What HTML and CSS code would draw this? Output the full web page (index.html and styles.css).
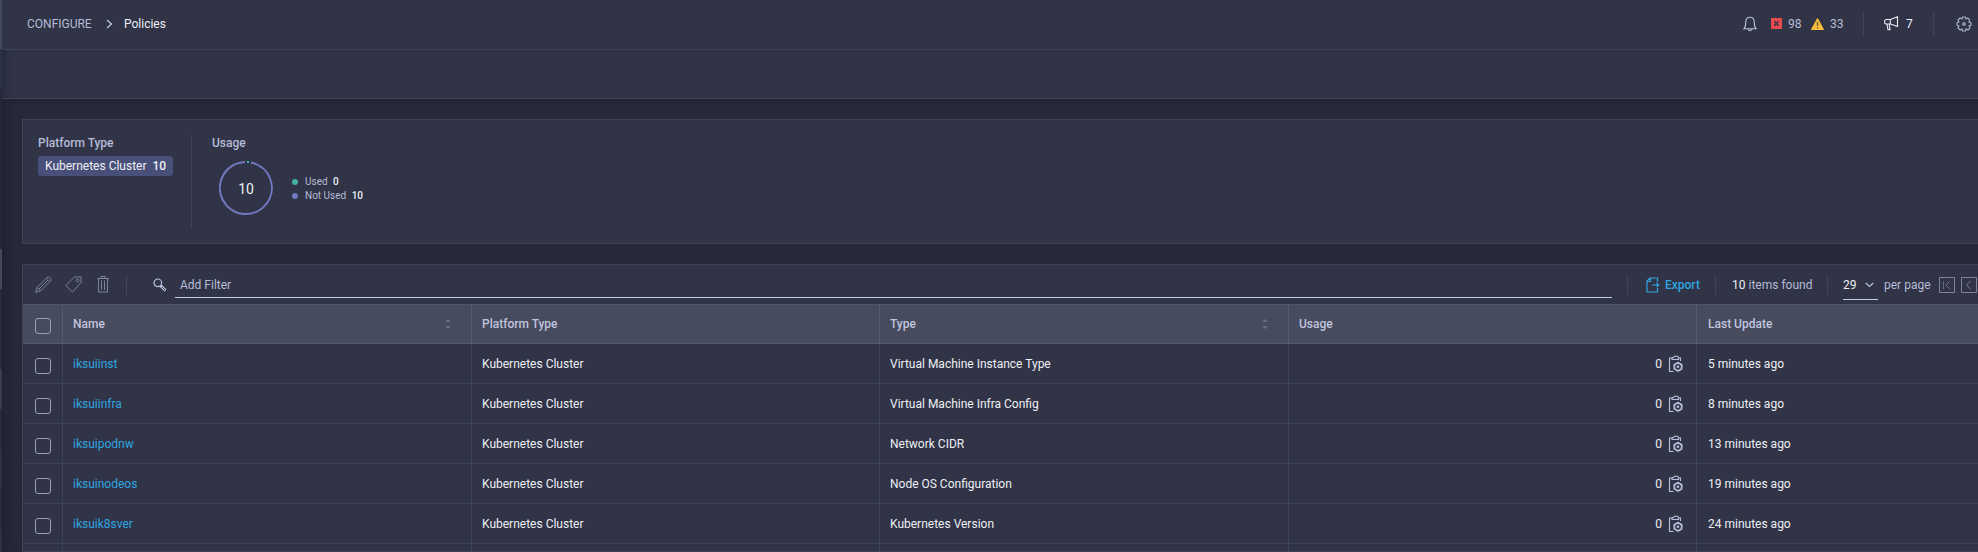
FILE: index.html
```html
<!DOCTYPE html>
<html lang="en">
<head>
<meta charset="utf-8">
<title>Policies</title>
<link rel="stylesheet" href="styles.css">
</head>
<body>
<svg class="defs" aria-hidden="true">
  <symbol id="clip" viewBox="0 0 16 18">
    <g fill="none" stroke="#bcc1de" stroke-width="1.1">
      <path d="M5.500 16.500H1.500V3H3.500M11 3H12.500V6"/>
      <path d="M4 4.500V2.500H5.500L6.500 1.300H9.500L10.500 2.500V4.500Z"/>
      <path d="M10 7.300L14 9.500V14L10 16.300L6 14V9.500Z"/>
      <circle cx="10" cy="11.800" r="3.400"/>
    </g>
    <circle cx="10" cy="11.800" r="1.300" fill="#bcc1de"/>
  </symbol>
  <symbol id="sort" viewBox="0 0 6 10">
    <path d="M0 3L3 0L6 3ZM0 7L3 10L6 7Z" fill="#6a6e80"/>
  </symbol>
</svg>
<div class="app">
  <div class="rail"><i class="a"></i><i class="b"></i><i class="c"></i><i class="d"></i><i class="e"></i><i class="f"></i><i class="g"></i><i class="h"></i><i class="g"></i><i class="h"></i></div>
  <div class="main">
    <header class="top">
      <span class="crumb">CONFIGURE</span>
      <svg class="chev" width="8" height="10" viewBox="0 0 8 10"><path d="M1 1L5.500 5L1 9" fill="none" stroke="#c3c8e2" stroke-width="1.300"/></svg>
      <span class="page">Policies</span>
      <div class="status">
        <svg class="bell" width="14" height="16" viewBox="0 0 14 16"><path d="M1 12.700Q2.700 11 2.700 6.500C2.700 3.300 4.200 1.300 7 1.300S11.300 3.300 11.300 6.500Q11.300 11 13 12.700ZM5 13.200Q7 16 9 13.200" fill="none" stroke="#bcc1de" stroke-width="1.100"/></svg>
        <svg class="err" width="11" height="11" viewBox="0 0 11 11"><path d="M0 0H11V11H0Z" fill="#e84b4b"/><path d="M3.300 3.300L7.700 7.700M7.700 3.300L3.300 7.700" stroke="#31344a" stroke-width="1.500"/></svg>
        <span class="num">98</span>
        <svg class="warn" width="13" height="12" viewBox="0 0 13 12"><path d="M6.500 .5L12.500 11.500H.5Z" fill="#fabe3c" stroke="#fabe3c" stroke-linejoin="round"/><path d="M6.500 4V8M6.500 9V10.300" stroke="#5c543f" stroke-width="1.300"/></svg>
        <span class="num n2">33</span>
        <i class="rule"></i>
        <svg class="horn" width="15" height="15" viewBox="0 0 15 15"><path d="M2 3.500H6.500L13.500 .8V10.500L6.500 8H2Q.6 8 .6 5.800T2 3.500ZM6.300 3.500V8M13.500 .5V11M3 8L4 13.700H6L5.300 8" fill="none" stroke="#f0f1f8" stroke-width="1.100"/></svg>
        <span class="num white">7</span>
        <i class="rule r2"></i>
        <svg class="gear" width="16" height="16" viewBox="0 0 16 16"><path d="M6.600 1H9.400L9.800 2.900L11.700 1.900L13.700 3.900L12.900 6.100L15 6.600V9.400L13 9.900L14 11.900L12.100 14L10.100 12.900L9.400 15H6.600L6.100 13L4.100 14L2 12L3 10L1 9.400V6.600L3 6L2 4L4 2L6 3Z" fill="none" stroke="#aeb3cd" stroke-width="1.100"/><circle cx="8" cy="8" r="2" fill="#8d92aa"/></svg>
      </div>
    </header>
    <div class="sub"></div>
    <div class="content">
      <section class="summary">
        <div class="platform">
          <h3>Platform Type</h3>
          <div class="pill">Kubernetes Cluster <b>10</b></div>
        </div>
        <div class="usage">
          <h3>Usage</h3>
          <div class="chart">
            <svg width="54" height="54" viewBox="0 0 54 54"><path d="M32 1.500A26 26 0 1 1 26 1" fill="none" stroke="#7079c0" stroke-width="2"/><path d="M28 1H30" stroke="#42b19e" stroke-width="2"/><text class="total" x="27" y="32.500" text-anchor="middle">10</text></svg>
            <div class="legend">
              <div><i class="dot used"></i>Used <b>0</b></div>
              <div><i class="dot"></i>Not Used <b>10</b></div>
            </div>
          </div>
        </div>
      </section>
      <section class="list">
        <div class="tools">
          <svg class="pen" width="17" height="17" viewBox="0 0 17 17"><path d="M.7 16.300L2 11.500L12.500 1Q13.500 .2 14.500 1.200L15.800 2.500Q16.700 3.500 16 4.500L5.500 15ZM2 11.500L5.500 15M11.500 2L15 5.500M3.800 13.200L13 4" fill="none" stroke="#7f8399" stroke-width="1"/></svg>
          <svg class="tag" width="17" height="17" viewBox="0 0 17 17"><path d="M.8 9.500L9.500 1H16V6.500L7.500 16Z" fill="none" stroke="#7f8399"/><circle cx="12.500" cy="4.500" r="1.400" fill="none" stroke="#7f8399"/></svg>
          <svg class="bin" width="12" height="17" viewBox="0 0 12 17"><path d="M0 2.500H12M4 2.500V.5H8V2.500M1.500 2.500V16H10.500V2.500M4.500 4.500V14M7.500 4.500V14" fill="none" stroke="#7f8399"/></svg>
          <i class="rule t1"></i>
          <svg class="mag" width="14" height="14" viewBox="0 0 14 14"><circle cx="4.800" cy="4.800" r="3.800" fill="none" stroke="#bcc1de" stroke-width="1.200"/><path d="M7.500 7.500L12.500 12.500" stroke="#bcc1de" stroke-width="3"/><path d="M9 9L12 12" stroke="#303446"/></svg>
          <div class="filter">Add Filter</div>
          <i class="rule t2"></i>
          <svg class="exp" width="14" height="16" viewBox="0 0 14 16"><path d="M11.500 5V1H4L1 4V15H11.500V11M1 4.500H4.500V1M6 8H12.500M10.500 6L12.700 8L10.500 10" fill="none" stroke="#2fa4e0" stroke-width="1.200"/></svg>
          <span class="export">Export</span>
          <i class="rule t3"></i>
          <span class="found"><em>10</em> items found</span>
          <i class="rule t4"></i>
          <span class="size">29<svg width="9" height="6" viewBox="0 0 9 6"><path d="M.7 1L4.500 4.500L8.300 1" fill="none" stroke="#bcc1de" stroke-width="1.200"/></svg></span>
          <span class="per">per page</span>
          <svg class="pg" width="16" height="16" viewBox="0 0 16 16"><path d="M.5 .5H15.500V15.500H.5Z" fill="none" stroke="#7f8399"/><path d="M4.500 4V12M11 4L7 8L11 12" fill="none" stroke="#686c82"/></svg>
          <svg class="pg p2" width="16" height="16" viewBox="0 0 16 16"><path d="M.5 .5H15.500V15.500H.5Z" fill="none" stroke="#7f8399"/><path d="M9.500 4L5.500 8L9.500 12" fill="none" stroke="#7f8399"/></svg>
        </div>
        <div class="grid head"><div class="ck"><i></i></div><div>Name<svg class="sort"><use href="#sort"/></svg></div><div>Platform Type</div><div>Type<svg class="sort"><use href="#sort"/></svg></div><div>Usage</div><div>Last Update</div></div>
        <div class="grid"><div class="ck"><i></i></div><div class="link">iksuiinst</div><div>Kubernetes Cluster</div><div>Virtual Machine Instance Type</div><div class="use">0<svg><use href="#clip"/></svg></div><div>5 minutes ago</div></div>
        <div class="grid"><div class="ck"><i></i></div><div class="link">iksuiinfra</div><div>Kubernetes Cluster</div><div>Virtual Machine Infra Config</div><div class="use">0<svg><use href="#clip"/></svg></div><div>8 minutes ago</div></div>
        <div class="grid"><div class="ck"><i></i></div><div class="link">iksuipodnw</div><div>Kubernetes Cluster</div><div>Network CIDR</div><div class="use">0<svg><use href="#clip"/></svg></div><div>13 minutes ago</div></div>
        <div class="grid"><div class="ck"><i></i></div><div class="link">iksuinodeos</div><div>Kubernetes Cluster</div><div>Node OS Configuration</div><div class="use">0<svg><use href="#clip"/></svg></div><div>19 minutes ago</div></div>
        <div class="grid"><div class="ck"><i></i></div><div class="link">iksuik8sver</div><div>Kubernetes Cluster</div><div>Kubernetes Version</div><div class="use">0<svg><use href="#clip"/></svg></div><div>24 minutes ago</div></div>
        <div class="grid last"><div></div><div></div><div></div><div></div><div></div><div></div></div>
      </section>
    </div>
  </div>
</div>
</body>
</html>
```
FILE: styles.css
```css
* { box-sizing: border-box; }
body {
  margin: 0;
  width: 1978px;
  height: 552px;
  overflow: hidden;
  background: #272939;
  font: 12px/16px Roboto, sans-serif;
  color: #eeeff5;
}
svg { flex: none; display: block; }
.defs { position: absolute; width: 0; height: 0; }
.app { display: flex; height: 552px; }
.rail { width: 2px; flex: none; display: flex; flex-direction: column; background: #272939; }
.rail i { height: 40px; flex: none; }
.rail .a { height: 49px; background: #474b5e; }
.rail .b, .rail .h { background: #2e3245; }
.rail .c { height: 160px; background: #25283a; }
.rail .d { background: #44485b; }
.rail .e { height: 80px; background: #272a3b; }
.rail .f { background: #393d4f; }
.rail .g { background: #272a3b; }
.main { flex: 1; min-width: 0; display: flex; flex-direction: column; }
.top { height: 50px; flex: none; display: flex; align-items: center; padding: 0 6px 2px 25px; background: #303446; border-bottom: 1px solid #3f4356; }
.crumb { color: #b6bbd6; width: 79px; }
.chev { margin-right: 10px; }
.status { margin-left: auto; display: flex; align-items: center; height: 24px; }
.bell { margin-right: 14px; }
.err { margin-right: 6px; }
.num { width: 23px; color: #b6bbd6; }
.n2 { width: 33px; }
.warn { margin-right: 6px; }
.rule { width: 1px; height: 24px; flex: none; background: #414559; }
.horn { margin: 0 7px 0 20px; }
.white { width: 27px; color: #eeeff5; }
.r2 { margin-right: 22px; }
.sub { height: 49px; flex: none; background: #303446; border-bottom: 1px solid #3f4356; box-shadow: inset 8px 0 8px -6px #232637; }
.content { flex: 1; min-height: 0; padding: 20px 0 0 20px; background: linear-gradient(#232535, #272939 8px); box-shadow: inset 8px 0 8px -6px #1d1f2d; }
.summary { height: 125px; display: flex; padding: 15px 15px 0; background: #303446; border: 1px solid #3f4356; border-right: 0; }
h3 { margin: 0; font-size: 12px; line-height: 16px; font-weight: 500; color: #b6bbd6; }
.platform { width: 154px; height: 93px; border-right: 1px solid #3f4356; }
.pill { width: 135px; height: 20px; margin-top: 5px; padding: 2px 7px; border-radius: 3px; background: #484f78; white-space: nowrap; }
b { font-weight: 500; margin-left: 3px; color: #eeeff5; }
.usage { padding-left: 20px; }
.chart { display: flex; margin: 10px 0 0 7px; }
.total { font-size: 14px; fill: #eeeff5; }
.legend { margin: 14px 0 0 19px; font-size: 10px; line-height: 14px; color: #b6bbd6; }
.legend div { display: flex; align-items: center; white-space: pre; }
.dot { width: 6px; height: 6px; margin-right: 7px; border-radius: 50%; background: #7079c0; }
.dot.used { background: #42b19e; }
.list { margin-top: 20px; border: 1px solid #3f4356; border-width: 1px 0 0 1px; background: #303446; }
.tools { height: 39px; display: flex; align-items: center; white-space: nowrap; }
.pen { margin-left: 12px; }
.tag { margin-left: 13px; }
.bin { margin-left: 15px; }
.tools .rule { height: 20px; }
.t1 { margin: 0 26px 0 17px; }
.mag { margin-right: 8px; }
.filter { width: 1437px; height: 26px; padding: 5px; border-bottom: 1px solid #c3cce8; color: #b6bbd6; align-self: flex-start; margin-top: 7px; }
.t2 { margin: 0 18px 0 15px; }
.export { width: 50px; margin-left: 5px; font-weight: 500; color: #2fa4e0; }
.found { width: 95px; margin-left: 16px; color: #b6bbd6; }
em { font-style: normal; color: #eeeff5; }
.size { width: 35px; height: 28px; margin: 2px 6px 0 15px; display: flex; align-items: center; gap: 8px; padding-bottom: 1px; border-bottom: 1px solid #c3cce8; }
.per { width: 48px; color: #b6bbd6; }
.pg { margin-left: 7px; }
.p2 { margin-left: 6px; }
.grid { height: 40px; display: grid; grid-template-columns: 40px 409px 408px 409px 408px 1fr; border-bottom: 1px solid #3f4356; }
.grid > div { display: flex; align-items: center; padding-left: 10px; border-right: 1px solid #3f4356; }
.grid > div:last-child { padding-left: 11px; border-right: 0; }
.grid .ck { padding: 5px 0 0 12px; }
.ck i { width: 16px; height: 16px; border: 1px solid #9b9fb5; border-radius: 3px; }
.head { background: #474b5e; border-top: 1px solid #505467; border-bottom-color: #565a6c; font-weight: 500; color: #c0c4de; }
.head .ck { padding-top: 4px; }
.head > div { border-color: #565a6c; }
.sort { width: 6px; height: 10px; margin-left: auto; margin-right: 20px; }
.link { color: #2fa4e0; }
.use { justify-content: flex-end; }
.use svg { width: 16px; height: 18px; margin: 0 12px 0 6px; }
.last { height: 8px; }
```
